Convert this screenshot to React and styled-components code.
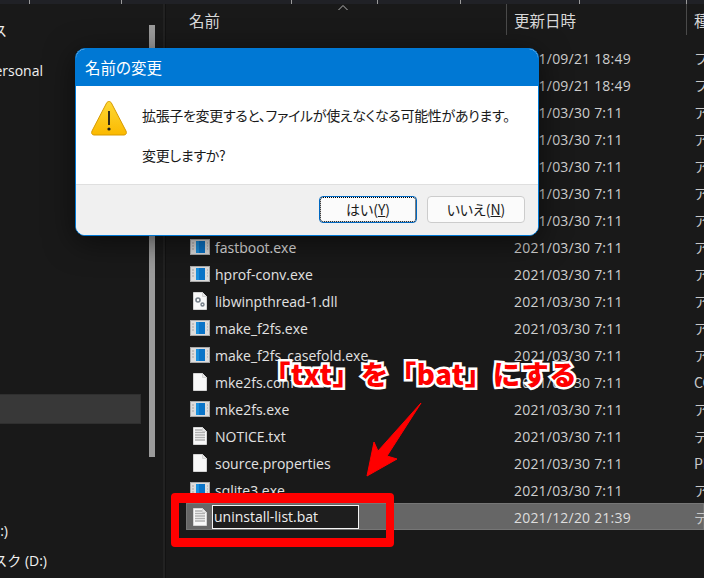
import styled, { createGlobalStyle } from "styled-components";

const UI_FONT = `"Open Sans", "Noto Sans CJK JP", sans-serif`;

const GlobalStyle = createGlobalStyle`
    html, body {
        margin: 0;
        padding: 0;
        background: #191919;
    }
    * {
        box-sizing: border-box;
    }
`

const Page = styled.div`
    position: relative;
    width: 704px;
    height: 578px;
    overflow: hidden;
    background: #191919;
    color: #dedede;
    font-family: ${UI_FONT};
    font-size: 14px;
`

const TopStrip = styled.div`
    display: flex;
    height: 4px;
    background: #202126;
`

const StripCell = styled.div`
    width: ${(p) => p.$w}px;
    border-right: 1px solid #9a9a9a;
`

const Main = styled.div`
    display: flex;
    height: 574px;
`

const Sidebar = styled.div`
    display: flex;
    width: 163px;
    flex-shrink: 0;
`

const SideList = styled.div`
    display: flex;
    flex-direction: column;
    width: 149px;
`

const SideItem = styled.div`
    display: flex;
    justify-content: flex-end;
    align-items: center;
    width: ${(p) => p.$end}px;
    height: 30px;
    margin-top: ${(p) => p.$top || 0}px;
    overflow: hidden;
    white-space: nowrap;
    color: #f0f0f0;
`

const SideSelected = styled.div`
    width: 141px;
    height: 30px;
    margin-top: ${(p) => p.$top}px;
    background: #383838;
    border: 1px solid #2f2f2f;
    border-left: 0;
`

const ScrollThumb = styled.div`
    width: 6px;
    height: 432px;
    margin-top: 21px;
    background: #9b9b9b;
`

const Divider = styled.div`
    width: 3px;
    flex-shrink: 0;
    background: #222222;
    border-right: 1px solid #121212;
`

const FilePane = styled.div`
    flex: 1;
    min-width: 0;
`

const HeaderRow = styled.div`
    display: flex;
    height: 31px;
    margin-bottom: 9px;
`

const HeaderCell = styled.div`
    display: flex;
    align-items: center;
    flex-shrink: 0;
    width: ${(p) => p.$w}px;
    padding-left: ${(p) => p.$pad}px;
    border-right: ${(p) => (p.$line ? "1px solid #4a4a4a" : "0")};
    font-family: "Noto Sans CJK JP", sans-serif;
    font-size: 15.5px;
    color: #d8d8d8;
    white-space: nowrap;
`

const SortMark = styled.svg`
    position: absolute;
    left: 338px;
    top: 4px;
`

const Row = styled.div`
    display: flex;
    align-items: center;
    height: 27px;
    margin-left: 20px;
    white-space: nowrap;
    background: ${(p) => (p.$selected ? "#666666" : "transparent")};
    box-shadow: ${(p) => (p.$selected ? "inset 0 0 0 1px #767676" : "none")};
`

const IconSlot = styled.div`
    display: flex;
    justify-content: center;
    width: 20px;
    margin-left: 4px;
    flex-shrink: 0;
`

const NameCell = styled.div`
    width: 304px;
    padding: 1px 0 0 5px;
    flex-shrink: 0;
    color: #e2e2e2;
`

const RenameInput = styled.div`
    display: flex;
    align-items: center;
    width: 147px;
    height: 24px;
    margin-left: 2px;
    margin-right: 155px;
    padding-left: 1px;
    flex-shrink: 0;
    background: #1e1e1e;
    border: 1px solid #f4f4f4;
    color: #eeeeee;
`

const DateCell = styled.div`
    width: 180px;
    padding-top: 1px;
    flex-shrink: 0;
    letter-spacing: 0.2px;
    color: ${(p) => (p.$selected ? "#dddddd" : "#cfcfcf")};
`

const TypeCell = styled.div`
    font-family: "Noto Sans CJK JP", sans-serif;
    font-size: 14px;
    color: #c8c8c8;
`

const Dialog = styled.div`
    position: absolute;
    left: 75px;
    top: 48px;
    display: flex;
    flex-direction: column;
    width: 464px;
    height: 188px;
    overflow: hidden;
    background: #ffffff;
    border: 1px solid #0078d4;
    border-radius: 10px;
    box-shadow: 0 6px 30px rgba(0, 0, 0, 0.55);
    font-family: "Noto Sans CJK JP", sans-serif;
`

const TitleBar = styled.div`
    display: flex;
    align-items: center;
    height: 37px;
    padding: 0 0 2px 9px;
    flex-shrink: 0;
    background: #0078d4;
    color: #ffffff;
    font-size: 15.5px;
    font-feature-settings: "palt";
`

const DialogBody = styled.div`
    display: flex;
    flex: 1;
    padding: 14px 0 0 15px;
    gap: 15px;
`

const MessageBox = styled.div`
    display: flex;
    flex-direction: column;
    gap: 20px;
    padding-top: 5px;
    color: #1a1a1a;
    font-size: 14px;
    line-height: 20px;
    letter-spacing: -0.33px;
    font-feature-settings: "palt";
    white-space: nowrap;
`

const Footer = styled.div`
    display: flex;
    justify-content: flex-end;
    gap: 10px;
    height: 51px;
    flex-shrink: 0;
    padding: 11px 13px 0 0;
    background: #f0f0f0;
    border-top: 1px solid #dfdfdf;
`

const DialogButton = styled.div`
    display: flex;
    align-items: center;
    justify-content: center;
    width: 98px;
    height: 27px;
    padding-bottom: 2px;
    background: #fbfbfb;
    border: 1px solid ${(p) => (p.$primary ? "#0067c0" : "#cccccc")};
    border-radius: 4px;
    color: #1a1a1a;
    font-size: 14px;
    font-feature-settings: "palt";
    outline: ${(p) => (p.$primary ? "1px dotted #000000" : "none")};
    outline-offset: -2px;
`

const Callout = styled.div`
    position: absolute;
    left: 263px;
    top: 351px;
    font-family: "Noto Sans CJK JP", sans-serif;
    font-size: 27.5px;
    line-height: 44px;
    letter-spacing: 0.6px;
    font-weight: 900;
    white-space: nowrap;
    color: #ff0000;
    -webkit-text-stroke: 5px #ffffff;
    paint-order: stroke fill;
`

const Arrow = styled.svg`
    position: absolute;
    left: 360px;
    top: 396px;
`

const RedFrame = styled.div`
    position: absolute;
    left: 171px;
    top: 493px;
    width: 223px;
    height: 54px;
    border: solid #ff0000;
    border-width: 10px 8px 9px 8px;
    border-radius: 4px;
`

function ExeIcon() {
    return (
        <svg width="20" height="16" viewBox="0 0 20 16">
            <rect x="0" y="0" width="20" height="16" fill="#a9a9a9" />
            <rect x="1" y="1" width="18" height="14" fill="#dcdcdc" />
            <rect x="6" y="2" width="9" height="12" fill="#0a74c8" />
            <rect x="6" y="2" width="3" height="12" fill="#1a8fdc" />
            <path d="M2 4h2M2 7h2M2 10h2M17 4h1M17 7h1M17 10h1" stroke="#a4a4a4" />
        </svg>
    )
}

function PageIcon({ lines, gears }) {
    return (
        <svg width="14" height="18" viewBox="0 0 14 18">
            <path d="M0.5 0.5H9.5L13.5 4.5V17.5H0.5Z" fill="#f8f8f8" stroke="#d4d4d4" />
            <path d="M9.5 0.5V4.5H13.5" fill="#e6e6e6" stroke="#d4d4d4" />
            {lines && (
                <path d="M2 3h7M2 5.5h10M2 8h10M2 10.5h10M2 13h10" stroke="#b0b0b0" strokeWidth="1.4" />
            )}
            {gears && (
                <g fill="none" stroke="#77808a">
                    <circle cx="5" cy="8" r="2" strokeWidth="1.6" />
                    <circle cx="9.5" cy="12.5" r="1.5" strokeWidth="1.4" />
                </g>
            )}
        </svg>
    )
}

function WarningIcon() {
    return (
        <svg width="36" height="36" viewBox="0 0 36 36" style={{ flexShrink: 0 }}>
            <defs>
                <linearGradient id="warnFill" x1="0" y1="0" x2="0" y2="1">
                    <stop offset="0" stopColor="#fdd835" />
                    <stop offset="1" stopColor="#fbb900" />
                </linearGradient>
            </defs>
            <path
                d="M18 1.5C19 1.5 19.8 2 20.4 3L35 31C36 33 35 35 33 35H3C1 35 0 33 1 31L15.6 3C16.2 2 17 1.5 18 1.5Z"
                fill="url(#warnFill)"
                stroke="#d79a00"
            />
            <path d="M18 11V25" stroke="#1a1a1a" strokeWidth="1.8" />
            <circle cx="18" cy="29" r="1.6" fill="#1a1a1a" />
        </svg>
    )
}

const FOLDER = "ファイル フォルダー";
const APP = "アプリケーション";
const OLD_DATE = "2021/03/30 7:11";

const files = [
    { date: "2021/09/21 18:49", type: FOLDER },
    { date: "2021/09/21 18:49", type: FOLDER },
    { date: OLD_DATE, type: APP },
    { date: OLD_DATE, type: APP },
    { date: OLD_DATE, type: APP },
    { date: OLD_DATE, type: APP },
    { date: OLD_DATE, type: APP },
    { name: "fastboot.exe", icon: "exe", date: OLD_DATE, type: APP },
    { name: "hprof-conv.exe", icon: "exe", date: OLD_DATE, type: APP },
    { name: "libwinpthread-1.dll", icon: "dll", date: OLD_DATE, type: APP },
    { name: "make_f2fs.exe", icon: "exe", date: OLD_DATE, type: APP },
    { name: "make_f2fs_casefold.exe", icon: "exe", date: OLD_DATE, type: APP },
    { name: "mke2fs.conf", icon: "blank", date: OLD_DATE, type: "CONF ファイル" },
    { name: "mke2fs.exe", icon: "exe", date: OLD_DATE, type: APP },
    { name: "NOTICE.txt", icon: "text", date: OLD_DATE, type: "テキスト ドキュメント" },
    { name: "source.properties", icon: "blank", date: OLD_DATE, type: "PROPERTIES ファイル" },
    { name: "sqlite3.exe", icon: "exe", date: OLD_DATE, type: APP },
]

function FileIcon({ kind }) {
    if (kind === "exe") return <ExeIcon />
    if (kind === "dll") return <PageIcon gears />
    if (kind === "text") return <PageIcon lines />
    if (kind === "blank") return <PageIcon />
    return null
}

export default function App() {
    return (
        <Page>
            <GlobalStyle />
            <TopStrip>
                {[30, 92, 170, 86, 83, 119, 107].map((w, i) => (
                    <StripCell key={i} $w={w} />
                ))}
            </TopStrip>
            <Main>
                <Sidebar>
                    <SideList>
                        <SideItem $end={7} $top={11}>クイック アクセス</SideItem>
                        <SideItem $end={43} $top={10}>OneDrive - Personal</SideItem>
                        <SideSelected $top={309} />
                        <SideItem $end={8} $top={91}>ローカル ディスク (C:)</SideItem>
                        <SideItem $end={47}>ローカル ディスク (D:)</SideItem>
                    </SideList>
                    <ScrollThumb />
                </Sidebar>
                <Divider />
                <FilePane>
                    <HeaderRow>
                        <HeaderCell $w={341} $pad={23} $line>名前</HeaderCell>
                        <HeaderCell $w={180} $pad={7} $line>更新日時</HeaderCell>
                        <HeaderCell $w={100} $pad={7}>種類</HeaderCell>
                    </HeaderRow>
                    {files.map((f, i) => (
                        <Row key={i}>
                            <IconSlot><FileIcon kind={f.icon} /></IconSlot>
                            <NameCell>{f.name}</NameCell>
                            <DateCell>{f.date}</DateCell>
                            <TypeCell>{f.type}</TypeCell>
                        </Row>
                    ))}
                    <Row $selected>
                        <IconSlot><PageIcon lines /></IconSlot>
                        <RenameInput>uninstall-list.bat</RenameInput>
                        <DateCell $selected>2021/12/20 21:39</DateCell>
                        <TypeCell>テキスト ドキュメント</TypeCell>
                    </Row>
                </FilePane>
            </Main>
            <SortMark width="10" height="7" viewBox="0 0 10 7">
                <path d="M0.5 6L5 1.5L9.5 6" fill="none" stroke="#b5b5b5" />
            </SortMark>

            <Dialog>
                <TitleBar>名前の変更</TitleBar>
                <DialogBody>
                    <WarningIcon />
                    <MessageBox>
                        <div>拡張子を変更すると、ファイルが使えなくなる可能性があります。</div>
                        <div>変更しますか?</div>
                    </MessageBox>
                </DialogBody>
                <Footer>
                    <DialogButton $primary>はい(<u>Y</u>)</DialogButton>
                    <DialogButton>いいえ(<u>N</u>)</DialogButton>
                </Footer>
            </Dialog>

            <Callout>「txt」を「bat」にする</Callout>
            <Arrow width="66" height="84" viewBox="0 0 66 84">
                <path
                    d="M61 7L27 60L37 63L7 80L14 46L18 55Z"
                    fill="#ff0000"
                    stroke="#ff0000"
                    strokeLinejoin="round"
                />
            </Arrow>
            <RedFrame />
        </Page>
    )
}
